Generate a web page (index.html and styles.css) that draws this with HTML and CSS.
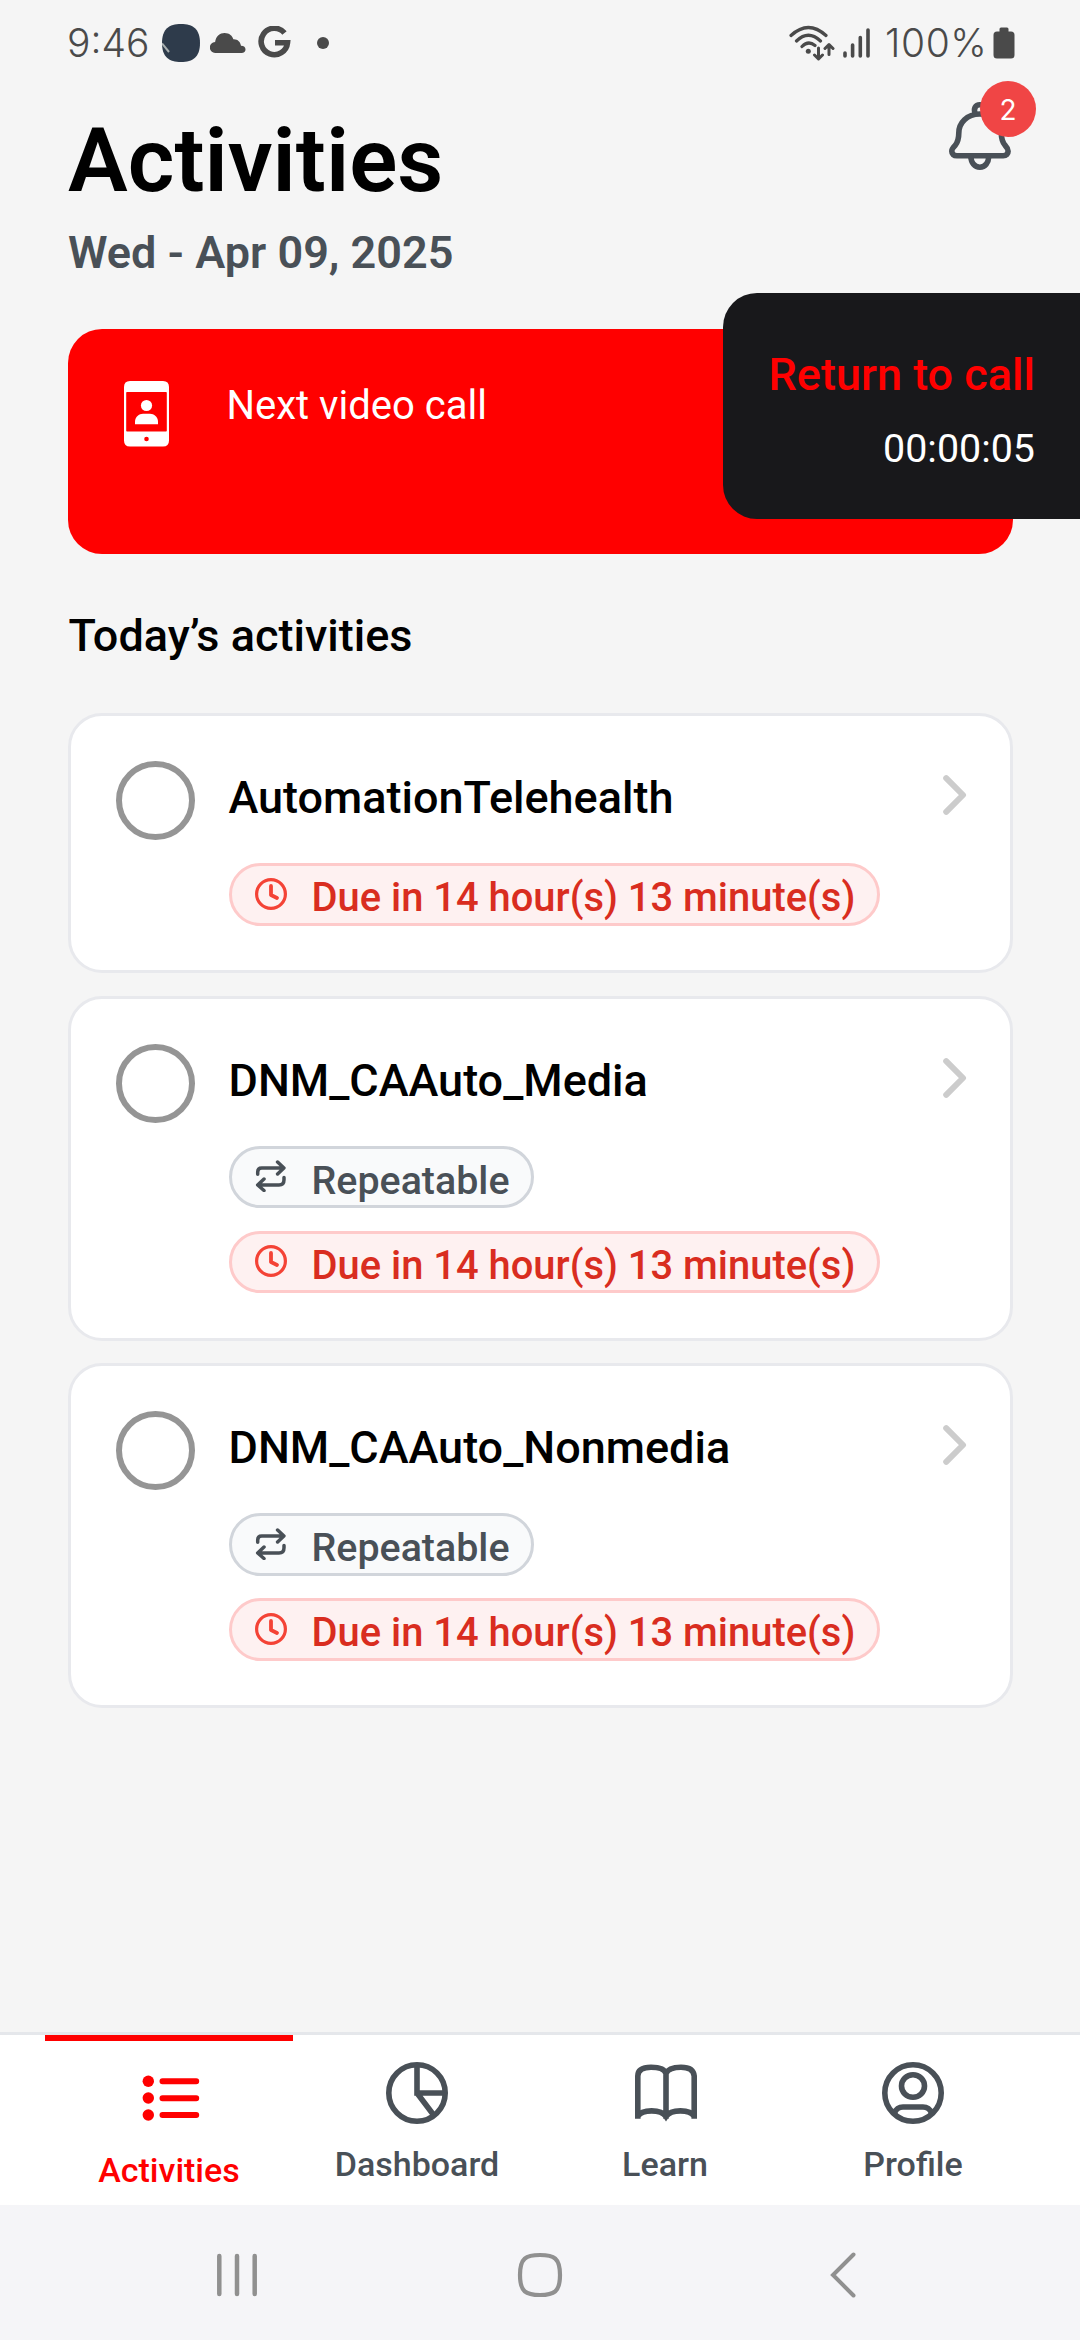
FILE: index.html
```html
<!DOCTYPE html>
<html lang="en">
<head>
<meta charset="utf-8">
<title>Activities</title>
<link rel="stylesheet" href="styles.css">
</head>
<body>
<svg class="defs" aria-hidden="true">
  <symbol id="chevron" viewBox="0 0 24 40"><path d="M3.2 3.2 20 20 3.2 36.8" fill="none" stroke="#ccc" stroke-width="6" stroke-linecap="round" stroke-linejoin="round"/></symbol>
  <symbol id="clock" viewBox="0 0 32 32"><g fill="none" stroke="#f44336" stroke-linecap="round" stroke-linejoin="round"><circle cx="16" cy="16" r="14.4" stroke-width="3.2"/><path d="M16 8v9l6 3" stroke-width="3.8"/></g></symbol>
  <symbol id="repeat" viewBox="0 0 32 32"><g fill="none" stroke="#495057" stroke-width="3.5" stroke-linecap="round" stroke-linejoin="round"><path d="M2.7 14.3V12q0-4 4-4h22M22.6 2l6.3 6-6.300 6"/><path d="M29 17.500v2.200q0 5.300-5 5.300H3M9 19l-6.300 6L9 30.500"/></g></symbol>
</svg>

<div class="status">
  <div class="status-left">
    <span class="time">9:46</span>
    <svg width="38" height="38" viewBox="0 0 38 38"><path d="M19 0C31 0 38 5 38 19S31 38 19 38 0 33 0 19 7 0 19 0Z" fill="#2e3b4b"/><path d="M0 19.500 7 28" stroke="#a9b0b0" stroke-width="2"/></svg>
    <svg class="cloud" width="36" height="20" viewBox="0 0 36 20"><path d="M5.500 20a5.500 5.500 0 0 1-.4-11C6 3 10 0 14.500 0c5 0 8 3 8.800 6.300C27.500 6 30.500 9 31 12.800c3 0 4.500 1.700 4.500 3.700S34 20 31.500 20Z" fill="#4a4a4a"/></svg>
    <svg class="google" width="34" height="34" viewBox="0 0 34 34"><path d="M26.500 7A13.200 13.200 0 1 0 29.500 16.700H17" fill="none" stroke="#4a4a4a" stroke-width="5.600"/></svg>
    <i class="more"></i>
  </div>
  <div class="status-right">
    <svg width="46" height="36" viewBox="0 0 46 36"><g fill="none" stroke="#4a4a4a" stroke-width="3.200" stroke-linecap="round" stroke-linejoin="round"><path d="M2 10.500Q19.300-5.500 37 10.500M7.500 16Q19.300 4.500 31.500 16M13 21.500Q19.300 15 26 20.500"/><path d="M29.500 23v10.500M25.500 30l4 4 4-4M40 29.500V20M36 23.500l4-4 4 4" stroke-width="3"/></g><circle cx="19.300" cy="26.300" r="2.500" fill="#4a4a4a"/></svg>
    <svg class="signal" width="28" height="30" viewBox="0 0 28 30"><path d="M2 25v3M9.600 17v11M17.300 9.500V28M25 2v26" stroke="#4a4a4a" stroke-width="3.600" stroke-linecap="round"/></svg>
    <span class="percent">100%</span>
    <svg class="battery" width="22" height="32" viewBox="0 0 22 32"><path d="M6.500 4.500V2q0-1.500 1.500-1.500h6q1.500 0 1.500 1.500v2.500H18q3.500 0 3.500 3.500v20q0 3.500-3.500 3.500H4Q.5 31.500.5 28V8Q.5 4.500 4 4.500Z" fill="#4a4a4a"/></svg>
  </div>
</div>

<header class="header">
  <div>
    <h1 class="title">Activities</h1>
    <div class="date">Wed - Apr 09, 2025</div>
  </div>
  <div class="bell">
    <svg width="62" height="70" viewBox="0 0 62 70"><g fill="none" stroke="#495057" stroke-width="5.600" stroke-linejoin="round"><path d="M30.700 13C18 13 9.800 22 9.800 32c0 6.500-.8 9-3.700 12.500C4 46.500 2.800 48 2.800 50.200c0 3 2 4.600 5 4.600h46.500c3 0 4.800-1.700 4.800-4.600 0-2.200-1-3.700-2.900-5.700-3-3.500-3.900-6-3.900-12.500C52.300 22 43.500 13 30.700 13Z"/><path d="M26.300 12.800c-2.200-5 .2-9 4.500-9s6.700 4 4.500 9M21.700 55c.5 7 4 11.200 9.200 11.200s8.500-4.200 9-11.200"/></g></svg>
    <span class="badge">2</span>
  </div>
</header>

<main class="main">
  <section class="next-call">
    <svg width="46" height="66" viewBox="0 0 46 66"><path fill="#fff" fill-rule="evenodd" d="M6 0h33q6 0 6 6v53.500q0 6-6 6H6q-6 0-6-6V6Q0 0 6 0ZM3 11q-.8 0-.8.800V49.700q0 .8.800.8h39q.8 0 .8-.8V11.800q0-.8-.8-.8ZM22.500 55.700a2.300 2.300 0 1 0 0 4.600 2.300 2.300 0 0 0 0-4.600Z"/><circle cx="22.500" cy="24.500" r="5.600" fill="#fff"/><path d="M11 43.300v-2.500c0-5 4-8 8-8h7c4 0 8 3 8 8v2.500Z" fill="#fff"/></svg>
    <span>Next video call</span>
  </section>

  <h2 class="section-title">Today’s activities</h2>

  <div class="list">
    <article class="card">
      <i class="check"></i>
      <div class="info">
        <h3 class="name">AutomationTelehealth</h3>
        <div class="pill due"><svg><use href="#clock"/></svg>Due in 14 hour(s) 13 minute(s)</div>
      </div>
      <svg class="chevron"><use href="#chevron"/></svg>
    </article>
    <article class="card">
      <i class="check"></i>
      <div class="info">
        <h3 class="name">DNM_CAAuto_Media</h3>
        <div class="pill repeat"><svg><use href="#repeat"/></svg>Repeatable</div>
        <div class="pill due"><svg><use href="#clock"/></svg>Due in 14 hour(s) 13 minute(s)</div>
      </div>
      <svg class="chevron"><use href="#chevron"/></svg>
    </article>
    <article class="card">
      <i class="check"></i>
      <div class="info">
        <h3 class="name">DNM_CAAuto_Nonmedia</h3>
        <div class="pill repeat"><svg><use href="#repeat"/></svg>Repeatable</div>
        <div class="pill due"><svg><use href="#clock"/></svg>Due in 14 hour(s) 13 minute(s)</div>
      </div>
      <svg class="chevron"><use href="#chevron"/></svg>
    </article>
  </div>
</main>

<aside class="call">
  <strong>Return to call</strong>
  <span>00:00:05</span>
</aside>

<nav class="tabs">
  <a class="tab active">
    <svg width="62" height="62" viewBox="0 0 62 62"><g fill="#f00"><circle cx="10.300" cy="13.200" r="5.700"/><circle cx="10.300" cy="30" r="5.700"/><circle cx="10.300" cy="47" r="5.700"/></g><path d="M24.500 13.200h33.700M24.500 30.200h33.700M24.500 47h33.700" stroke="#f00" stroke-width="6" stroke-linecap="round"/></svg>
    <span>Activities</span>
  </a>
  <a class="tab">
    <svg width="62" height="62" viewBox="0 0 62 62"><g fill="none" stroke="#495057" stroke-width="5.600"><circle cx="31" cy="31" r="28.200"/><path d="M31 3v28h28M31 31l17 22.500"/></g></svg>
    <span>Dashboard</span>
  </a>
  <a class="tab">
    <svg class="book" width="64" height="62" viewBox="0 0 64 62"><path d="M3.800 56.700V14Q3.800 5.200 17 5.200T32 11.500Q34.500 5.200 47 5.200T60.200 14v42.700M32 10v46.700M3.800 54.500C8 47 27 47 32 54.500 37 47 56 47 60.200 54.500" fill="none" stroke="#495057" stroke-width="5.600"/></svg>
    <span>Learn</span>
  </a>
  <a class="tab">
    <svg width="62" height="62" viewBox="0 0 62 62"><g fill="none" stroke="#495057" stroke-width="5.600"><circle cx="31" cy="31" r="28.200"/><ellipse cx="31" cy="24" rx="11.500" ry="11.300"/><path d="M12.500 51c1.500-4 5-6 8.500-6h20c3.500 0 7 2 8.500 6"/></g></svg>
    <span>Profile</span>
  </a>
</nav>

<div class="system">
  <div><svg width="42" height="46" viewBox="0 0 42 46"><path d="M3.300 4v38M21 4v38M38.700 4v38" stroke="#909090" stroke-width="4.500" stroke-linecap="round"/></svg></div>
  <div><svg width="46" height="46" viewBox="0 0 46 46"><path d="M23 3C37 3 43 6 43 23S37 43 23 43 3 40 3 23 9 3 23 3Z" fill="none" stroke="#909090" stroke-width="4.200"/></svg></div>
  <div><svg width="28" height="48" viewBox="0 0 28 48"><path d="M24.500 3.500 4 24l20.500 20.500" fill="none" stroke="#909090" stroke-width="4" stroke-linecap="round"/></svg></div>
</div>
</body>
</html>
```
FILE: styles.css
```css
* { box-sizing: border-box; }
body {
  margin: 0;
  width: 1080px;
  height: 2340px;
  overflow: hidden;
  display: flex;
  flex-direction: column;
  position: relative;
  background: #f5f5f5;
  color: #000;
  font-family: Roboto, sans-serif;
}
h1, h2, h3 { margin: 0; font-weight: 500; }
svg { display: block; flex: none; }
.defs { position: absolute; width: 0; height: 0; }

.status {
  height: 86px;
  padding: 0 65px 0 67px;
  display: flex;
  justify-content: space-between;
  color: #4a4a4a;
  font: 300 39px/86px Inter, sans-serif;
}
.status-left, .status-right { display: flex; align-items: center; }
.time { width: 95px; }
.cloud { margin-left: 10px; }
.google { margin-left: 12px; }
.more { width: 12px; height: 12px; margin-left: 25px; border-radius: 50%; background: #4a4a4a; }
.signal { margin-left: 8px; }
.percent { margin-left: 14px; width: 104px; letter-spacing: .6px; white-space: nowrap; }
.battery { margin-left: 4px; }

.header {
  display: flex;
  justify-content: space-between;
  padding: 22px 68px 0;
}
.title { font-size: 89.500px; line-height: 105px; font-weight: 600; }
.date { margin-top: 13px; font-size: 45px; line-height: 53px; font-weight: 600; color: #495057; }
.bell { position: relative; width: 62px; height: 70px; margin: -7px 1px 0 0; }
.badge {
  position: absolute;
  left: 31px;
  top: -20px;
  width: 56px;
  height: 56px;
  border-radius: 50%;
  background: #f04545;
  color: #fff;
  font: 400 28px/58px Inter, sans-serif;
  text-align: center;
}

.main { flex: 1; padding: 50px 67.500px 0; }
.next-call {
  height: 225px;
  padding: 52px 56px;
  display: flex;
  gap: 57px;
  border-radius: 34px;
  background: #f00;
  color: #fff;
  font-size: 40px;
  line-height: 50px;
}
.section-title { margin: 55px 0 51px; font-size: 45px; line-height: 53px; padding-left: 1px; }

.list { display: flex; flex-direction: column; gap: 22.500px; }
.card {
  display: flex;
  align-items: flex-start;
  padding: 45px 43px 44.500px 45px;
  border: 3px solid #e8e9ed;
  border-radius: 34px;
  background: #fff;
}
.check { width: 79px; height: 79px; border: 6px solid #959595; border-radius: 50%; }
.info {
  flex: 1;
  display: flex;
  flex-direction: column;
  align-items: flex-start;
  gap: 22.500px;
  margin-left: 34px;
}
.name { font-size: 45px; line-height: 53px; margin: 10px 0 16.500px; }
.pill {
  display: flex;
  height: 62.500px;
  padding: 0 21.500px 0 23px;
  border: 3px solid;
  border-radius: 32px;
  font-size: 39.900px;
  font-weight: 500;
  line-height: 63px;
}
.pill svg { width: 32px; height: 32px; margin: 11.500px 25px 0 0; }
.due { color: #d92d20; background: #fef1f1; border-color: #fecaca; }
.repeat { color: #495057; background: #f9fafb; border-color: #d1d5db; font-size: 39.400px; }
.chevron { width: 24px; height: 40px; margin-top: 14px; }

.call {
  position: absolute;
  top: 293px;
  right: 0;
  width: 357px;
  height: 226px;
  padding: 55px 45px 0;
  border-radius: 34px 0 0 34px;
  background: #18181b;
  color: #fff;
  text-align: right;
  white-space: nowrap;
}
.call strong { display: block; font-size: 45px; line-height: 53px; font-weight: 500; color: #f00; }
.call span { display: block; margin-top: 24px; font-size: 39.400px; line-height: 47px; }

.tabs {
  height: 173px;
  padding: 0 43px 0 45px;
  display: flex;
  border-top: 3px solid #e5e7eb;
  background: #fff;
}
.tab {
  flex: 1;
  padding-top: 27px;
  display: flex;
  flex-direction: column;
  align-items: center;
  color: #495057;
  font-size: 34px;
  line-height: 40px;
  font-weight: 500;
}
.tab span { margin-top: 20px; }
.book { margin-left: 2px; }
.active { color: #f00; border-top: 6px solid #f00; }

.system {
  height: 135px;
  padding: 4px 86px 0;
  display: flex;
  align-items: center;
  background: #f5f5f8;
}
.system div { flex: 1; display: flex; justify-content: center; }
```
